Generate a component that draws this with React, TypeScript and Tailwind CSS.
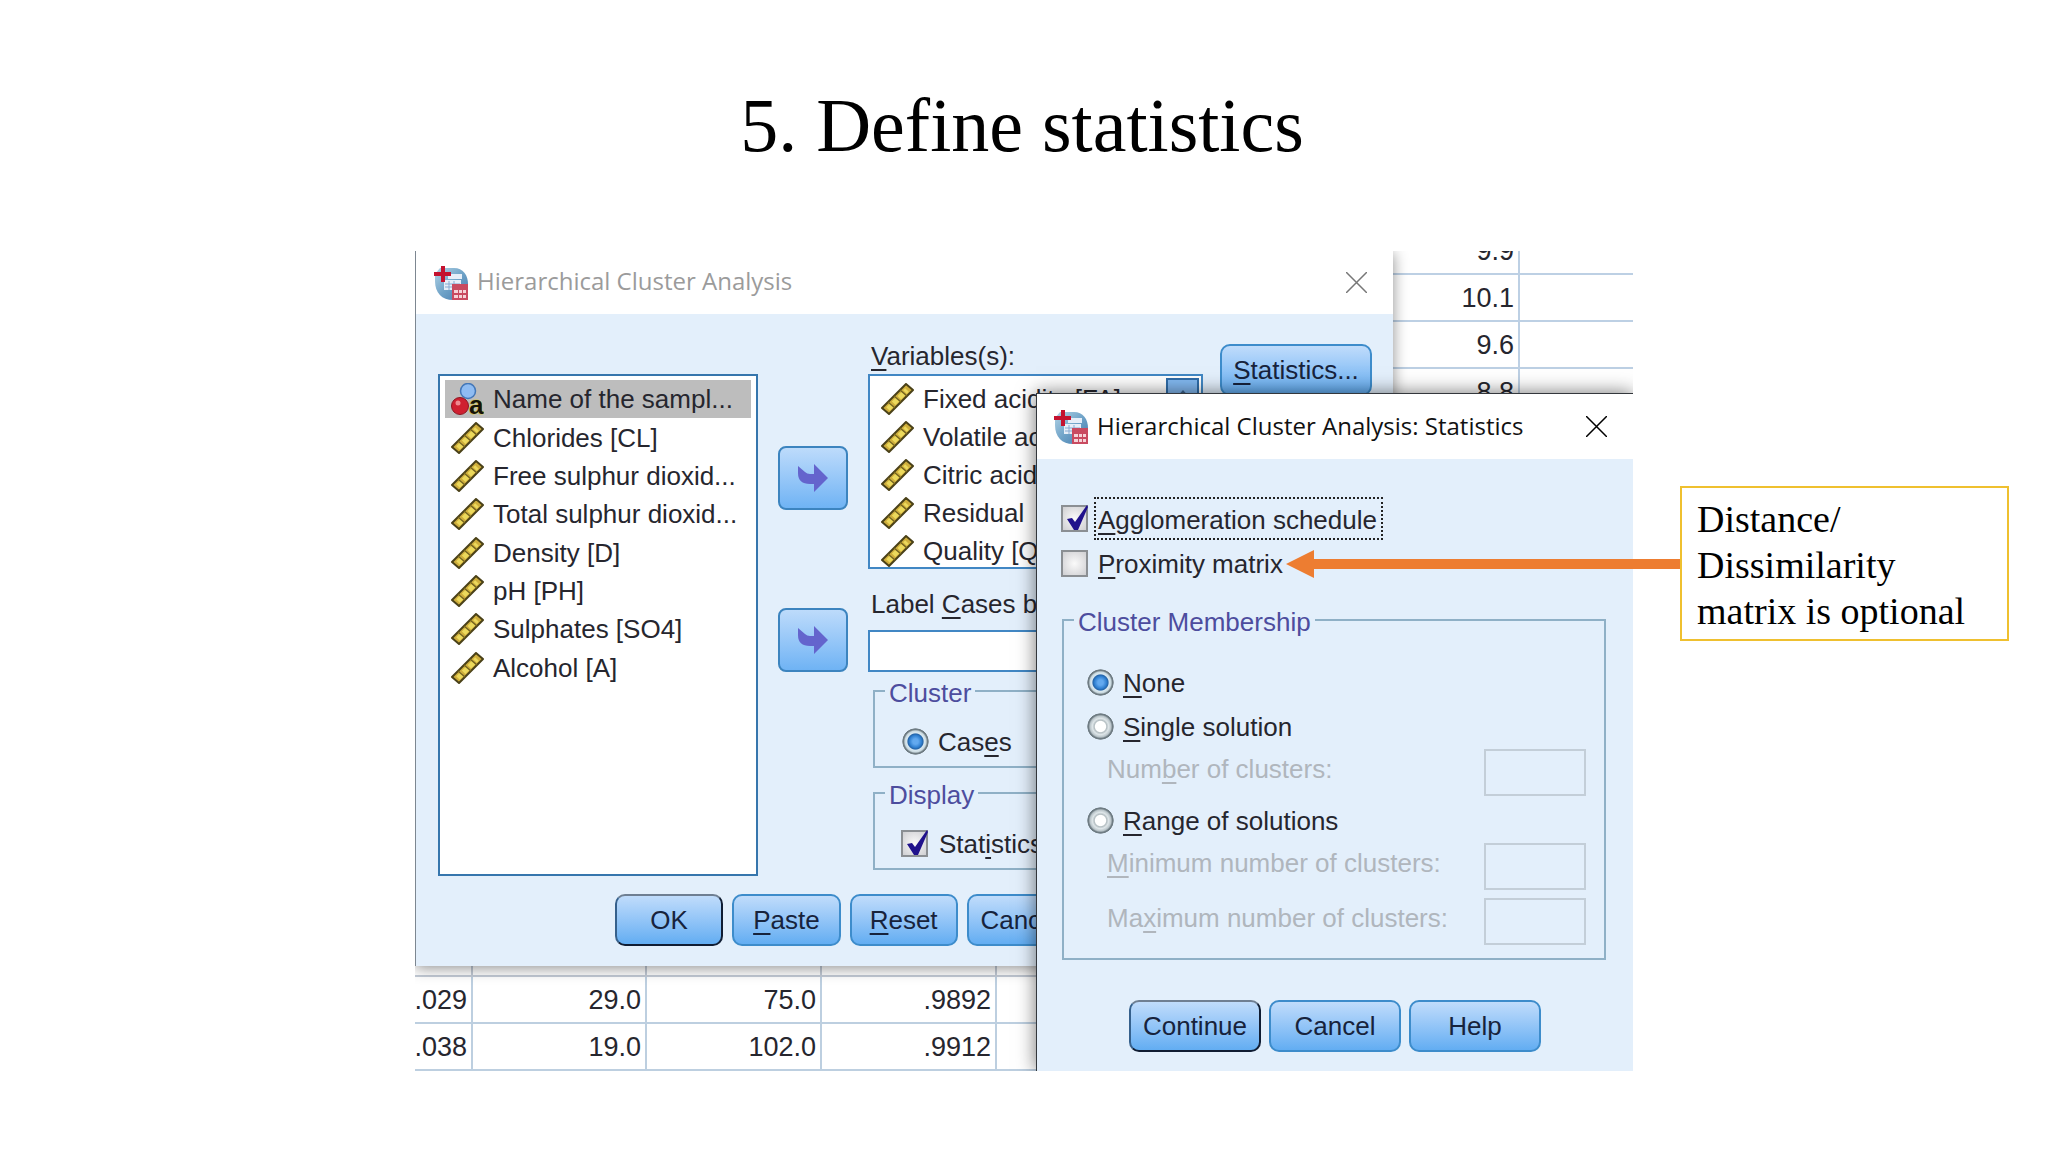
import React from 'react';

type FieldProps = { name: string; label: React.ReactNode; checked?: boolean };

// Underlined access key inside a label
const Key = ({ children }: { children: string }) => (
  <span className="underline decoration-2 underline-offset-4">{children}</span>
);

const AppIcon = () => (
  <svg viewBox="0 0 34 34" className="h-[34px] w-[34px] shrink-0" aria-hidden="true">
    <defs>
      <linearGradient id="globe" x1="0" y1="0" x2="1" y2="1">
        <stop offset="0" stopColor="#b4d4e6" />
        <stop offset="0.5" stopColor="#6fa3c8" />
        <stop offset="1" stopColor="#4379ac" />
      </linearGradient>
    </defs>
    <path d="M6 2H20C29 2 34 9 34 18V34H19C8 34 1 27 1 15V8Z" fill="url(#globe)" />
    <path d="M14 8H28V13H14ZM10 14H27V24H10Z" fill="#e6eef8" />
    <path d="M11 18H26M11 21H26M15 15V24M20 15V24" stroke="#86abd2" strokeWidth="1" />
    <path d="M7 0H11V6H17V10H11V16H7V10H0V6H7Z" fill="#c4122f" />
    <rect x="18" y="18" width="16" height="16" fill="#c94a60" />
    <path d="M20 24H24V27H20ZM25 24H28V27H25ZM29 24H32V27H29ZM20 29H24V32H20ZM25 29H28V32H25ZM29 29H32V32H29Z" fill="#f6d3d8" />
  </svg>
);

const RulerIcon = () => (
  <svg viewBox="0 0 33 32" className="h-8 w-[33px] shrink-0" aria-hidden="true">
    <path d="M1 25L25 1L32 7L8 31Z" fill="#cfae3c" stroke="#4a4118" strokeWidth="2" strokeLinejoin="round" />
    <path d="M7 26L26 7" stroke="#ecd95c" strokeWidth="5" strokeDasharray="6 2" />
    <path d="M7 19L14 25M13 13L20 19M19 7L26 13" stroke="#75641f" strokeWidth="1.500" />
  </svg>
);

const NominalIcon = () => (
  <svg viewBox="0 0 33 32" className="h-8 w-[33px] shrink-0" aria-hidden="true">
    <circle cx="17" cy="8" r="7.500" fill="#8fbcf2" stroke="#4377b8" strokeWidth="1.500" />
    <circle cx="9" cy="23" r="8.500" fill="#cf2030" stroke="#8d1722" strokeWidth="1" />
    <circle cx="7" cy="20" r="2.500" fill="#ee8a90" />
    <text x="18" y="31" fontFamily="Liberation Sans, sans-serif" fontSize="26" fontWeight="700" fill="#15130a" stroke="#d8c84a" strokeWidth="1" paintOrder="stroke">a</text>
  </svg>
);

const CloseButton = ({ className }: { className: string }) => (
  <button type="button" aria-label="Close" className={className}>
    <svg viewBox="0 0 21 21" className="h-[21px] w-[21px]" fill="none" stroke="currentColor" strokeWidth="1.5">
      <path d="M0 0L21 21M21 0L0 21" />
    </svg>
  </button>
);

const MoveButton = () => (
  <button
    type="button"
    aria-label="Move variable"
    className="flex h-16 items-center justify-center rounded-lg border-2 border-[#3c84bf] bg-linear-to-b from-[#bddbfb] to-[#6fb3f4]"
  >
    <svg viewBox="0 0 30 28" className="h-7 w-[30px]" fill="#6464cd" aria-hidden="true">
      <path d="M0 2L7 8Q9 10 12 10H16V0L30 14L16 28V20H12Q0 20 0 9Z" />
    </svg>
  </button>
);

const PushButton = ({ children, isDefault }: { children: React.ReactNode; isDefault?: boolean }) => (
  <button
    type="button"
    className={
      isDefault
        ? 'h-[52px] flex-1 rounded-[10px] border-2 border-t-[#6f7f92] border-r-[#101d33] border-b-[#101d33] border-l-[#35608c] bg-linear-to-b from-[#c0dcfb] to-[#62adf2] text-[#17233c]'
        : 'h-[52px] flex-1 rounded-[10px] border-2 border-[#3d8ccb] bg-linear-to-b from-[#c0dcfb] to-[#62adf2] text-[#17233c]'
    }
  >
    {children}
  </button>
);

const CheckField = ({ name, label, checked }: FieldProps) => (
  <label className="flex items-center gap-[6px]">
    <span className="relative h-[27px] w-[27px] shrink-0">
      <input
        type="checkbox"
        name={name}
        defaultChecked={checked}
        className="peer block h-full w-full appearance-none border-2 border-[#8b8f93] bg-[radial-gradient(circle,#fafafa,#cfcfd2)]"
      />
      <svg viewBox="0 0 27 27" className="pointer-events-none absolute inset-0 hidden peer-checked:block" aria-hidden="true">
        <path d="M6 14L11 13L14 17L26 0L27 2L17 25H13Z" fill="#20128c" />
      </svg>
    </span>
    {label}
  </label>
);

const RadioField = ({ name, label, checked }: FieldProps) => (
  <label className="flex items-center gap-[9px]">
    <input
      type="radio"
      name={name}
      defaultChecked={checked}
      className="h-[27px] w-[27px] shrink-0 appearance-none rounded-full bg-[radial-gradient(closest-side,#fff_38%,#b4bec2_46%,#dfe6e9_60%,#b9c4c9_78%,#6f7c83_88%,#6f7c83_95%,transparent)] checked:bg-[radial-gradient(closest-side,#62a9ef_20%,#2f7fd0_45%,#2464a8_56%,#dceaf2_64%,#c9d8de_78%,#6f7c83_88%,#6f7c83_95%,transparent)]"
    />
    {label}
  </label>
);

const Group = ({ title, className, children }: { title: string; className: string; children: React.ReactNode }) => (
  <fieldset className={`border-2 border-[#8fb0c6] ${className}`}>
    <legend className="ml-[10px] px-1 pt-1 text-[#4d4d9e]">{title}</legend>
    {children}
  </fieldset>
);

const sourceVariables = [
  'Chlorides [CL]',
  'Free sulphur dioxid...',
  'Total sulphur dioxid...',
  'Density [D]',
  'pH [PH]',
  'Sulphates [SO4]',
  'Alcohol [A]',
];

const selectedVariables = ['Fixed acidity [FA]', 'Volatile acidity', 'Citric acid', 'Residual', 'Quality [QT]'];

const alcoholColumn = ['9.9', '10.1', '9.6', '8.8'];

const bottomRows = [
  ['.029', '29.0', '75.0', '.9892'],
  ['.038', '19.0', '102.0', '.9912'],
];

const ClusterDialog = () => (
  <section className="relative w-[978px] shrink-0 border-l border-[#7d8791] bg-[#e3effb] shadow-[0_2px_14px_rgba(0,0,0,0.45)]">
    <header className="flex h-[63px] items-center bg-white pr-[26px] pl-[18px]">
      <AppIcon />
      <h2 className="ml-[9px] flex-1 pb-[3px] font-['Open_Sans','Noto_Sans',sans-serif] text-[24px] text-[#9b9b9b]">
        Hierarchical Cluster Analysis
      </h2>
      <CloseButton className="text-[#777]" />
    </header>
    <div className="flex pt-[29px] pr-[21px] pl-[22px]">
      <ul className="mt-[31px] grid h-[502px] w-[320px] grid-rows-8 border-2 border-[#3676ad] bg-white px-[5px] pt-[4px] pb-[187px]">
        <li className="flex items-center gap-[9px] bg-[#bdbdbd] pl-[6px]">
          <NominalIcon />
          Name of the sampl...
        </li>
        {sourceVariables.map((name) => (
          <li key={name} className="flex items-center gap-[9px] pl-[6px]">
            <RulerIcon />
            {name}
          </li>
        ))}
      </ul>
      <div className="mt-[103px] ml-5 flex w-[70px] flex-col gap-[98px]">
        <MoveButton />
        <MoveButton />
      </div>
      <div className="ml-5 flex w-[335px] flex-col">
        <p className="mb-[5px] pl-[3px]">
          <Key>V</Key>ariables(s):
        </p>
        <div className="flex h-[195px] border-2 border-[#4187c4] bg-white">
          <ul className="flex-1 overflow-hidden pt-[4px] pl-[11px]">
            {selectedVariables.map((name) => (
              <li key={name} className="flex h-[38px] items-center gap-[9px] whitespace-nowrap">
                <RulerIcon />
                {name}
              </li>
            ))}
          </ul>
          <div className="m-[2px] w-[33px] bg-[#dcebf9]">
            <button type="button" aria-label="Scroll up" className="block h-[34px] w-full border-2 border-[#2f6ca8] bg-[#82b8f0]">
              <svg viewBox="0 0 20 20" className="mx-auto h-5 w-5" fill="#3d6590">
                <path d="M10 5L17 13H3Z" />
              </svg>
            </button>
          </div>
        </div>
        <label htmlFor="labelCases" className="mt-[22px] pl-[3px]">
          Label <Key>C</Key>ases by
        </label>
        <input id="labelCases" type="text" className="mt-[13px] h-[42px] border-2 border-[#4187c4] bg-white px-2" />
        <Group title="Cluster" className="mt-[4px] ml-[5px] pb-[11px]">
          <div className="mt-[22px] ml-[27px]">
            <RadioField name="cluster" label={<span>Cas<Key>e</Key>s</span>} checked />
          </div>
        </Group>
        <Group title="Display" className="mt-[10px] ml-[5px] pb-[11px]">
          <div className="mt-[22px] ml-[26px]">
            <CheckField name="displayStatistics" label={<span className="pl-[5px]">Stat<Key>i</Key>stics</span>} checked />
          </div>
        </Group>
      </div>
      <div className="ml-[17px] flex flex-1 pt-px">
        <PushButton>
          <Key>S</Key>tatistics...
        </PushButton>
      </div>
    </div>
    <div className="mt-[18px] ml-[199px] flex w-[460px] gap-[9px] pb-[20px]">
      <PushButton isDefault>OK</PushButton>
      <PushButton>
        <Key>P</Key>aste
      </PushButton>
      <PushButton>
        <Key>R</Key>eset
      </PushButton>
      <PushButton>Cancel</PushButton>
    </div>
  </section>
);

const disabledInput = 'h-[47px] w-[102px] border-2 border-[#c3ced8] bg-transparent px-2';

const StatisticsDialog = () => (
  <section className="absolute top-[142px] right-0 bottom-0 left-[621px] border-t border-l border-[#33373c] bg-[#e3effb] shadow-[0_0_18px_rgba(0,0,0,0.55)]">
    <header className="flex h-[65px] items-center bg-white pr-[26px] pl-[17px]">
      <AppIcon />
      <h2 className="ml-[9px] flex-1 pb-[2px] font-['Open_Sans','Noto_Sans',sans-serif] text-[24px] text-[#111]">
        Hierarchical Cluster Analysis: Statistics
      </h2>
      <CloseButton className="text-black" />
    </header>
    <div className="mt-[38px] flex flex-col items-start gap-[10px] pl-6">
      <CheckField
        name="agglomeration"
        label={
          <span className="border-2 border-dotted border-[#222] pt-2 pr-1 pb-[5px] pl-[2px]">
            <Key>A</Key>gglomeration schedule
          </span>
        }
        checked
      />
      <CheckField name="proximity" label={<span className="pl-1"><Key>P</Key>roximity matrix</span>} />
    </div>
    <Group title="Cluster Membership" className="mt-[28px] mr-[27px] ml-[25px] pb-[13px]">
      <div className="pr-[18px] pl-[23px]">
        <div className="mt-[34px]">
          <RadioField name="membership" label={<span><Key>N</Key>one</span>} checked />
        </div>
        <div className="mt-[17px]">
          <RadioField name="membership" label={<span><Key>S</Key>ingle solution</span>} />
        </div>
        <div className="mt-[9px] flex items-start justify-between pl-5 text-[#b0b6bd]">
          <label htmlFor="count" className="pt-[7px]">
            Num<Key>b</Key>er of clusters:
          </label>
          <input id="count" type="text" disabled className={disabledInput} />
        </div>
        <div className="mt-[11px]">
          <RadioField name="membership" label={<span><Key>R</Key>ange of solutions</span>} />
        </div>
        <div className="mt-[9px] flex items-start justify-between pl-5 text-[#b0b6bd]">
          <label htmlFor="minimum" className="pt-[7px]">
            <Key>M</Key>inimum number of clusters:
          </label>
          <input id="minimum" type="text" disabled className={disabledInput} />
        </div>
        <div className="mt-2 flex items-start justify-between pl-5 text-[#b0b6bd]">
          <label htmlFor="maximum" className="pt-[7px]">
            Ma<Key>x</Key>imum number of clusters:
          </label>
          <input id="maximum" type="text" disabled className={disabledInput} />
        </div>
      </div>
    </Group>
    <div className="mt-10 ml-[92px] flex w-[412px] gap-2">
      <PushButton isDefault>Continue</PushButton>
      <PushButton>Cancel</PushButton>
      <PushButton>Help</PushButton>
    </div>
  </section>
);

const App: React.FC = () => {
  return (
    <main className="min-h-screen bg-white pt-[83px] font-['Liberation_Serif',serif] text-black">
      <h1 className="pr-1 text-center text-[76px] leading-[84px] [font-variant-ligatures:none]">5. Define statistics</h1>
      <div className="mt-[84px] flex items-start gap-[47px] pr-[39px] pl-[415px]">
        <figure className="relative min-w-0 flex-1 overflow-hidden font-['Liberation_Sans',sans-serif] text-[26px] leading-[26px] text-[#26262e]">
          <div className="flex">
            <ClusterDialog />
            <div className="flex-1">
              <table className="-mt-[23px] w-full table-fixed border-separate border-spacing-0 text-[27px]">
                <tbody>
                  {alcoholColumn.map((value) => (
                    <tr key={value} className="h-[47px]">
                      <td className="w-[127px] border-r-2 border-b-2 border-[#bdd0e4] pr-1 text-right">{value}</td>
                      <td className="border-b-2 border-[#bdd0e4]" />
                    </tr>
                  ))}
                </tbody>
              </table>
            </div>
          </div>
          {/* first column is cut off by the left edge */}
          <table className="-ml-[116px] w-[calc(100%+116px)] table-fixed border-separate border-spacing-0 text-[27px]">
            <tbody>
              <tr className="h-[11px]">
                <td className="w-[174px] border-r-2 border-b-2 border-[#c3cbd6]" />
                <td className="w-[174px] border-r-2 border-b-2 border-[#c3cbd6]" />
                <td className="w-[175px] border-r-2 border-b-2 border-[#c3cbd6]" />
                <td className="w-[175px] border-r-2 border-b-2 border-[#c3cbd6]" />
                <td className="border-b-2 border-[#c3cbd6]" />
              </tr>
              {bottomRows.map((row) => (
                <tr key={row[0]} className="h-[47px]">
                  {row.map((value) => (
                    <td key={value} className="border-r-2 border-b-2 border-[#bdcfe0] pr-1 text-right">
                      {value}
                    </td>
                  ))}
                  <td className="border-b-2 border-[#bdcfe0]" />
                </tr>
              ))}
            </tbody>
          </table>
          <StatisticsDialog />
        </figure>
        <aside className="relative mt-[235px] w-[329px] shrink-0 border-2 border-[#efc02f] bg-white pt-2 pr-8 pb-[5px] pl-[15px] text-[38px] leading-[46px]">
          Distance/ Dissimilarity matrix is optional
          <svg viewBox="0 0 394 28" className="absolute top-[62px] right-full mr-[2px] h-7 w-[394px]" fill="#ed7d31" aria-hidden="true">
            <path d="M0 14L28 0V9H394V19H28V28Z" />
          </svg>
        </aside>
      </div>
    </main>
  );
};

export default App;
